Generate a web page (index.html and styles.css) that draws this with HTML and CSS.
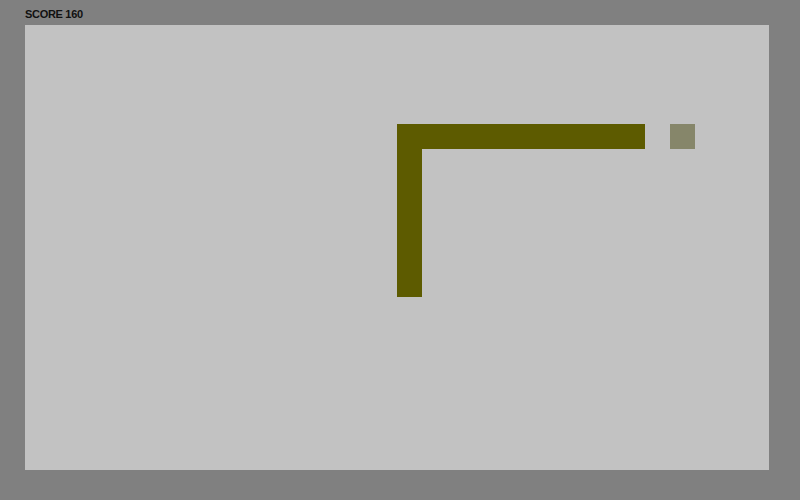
FILE: index.html
```html
<!DOCTYPE html>
<html>
<head>
<meta charset="utf-8">
<link rel="stylesheet" href="styles.css">
</head>
<body>
<div class="game">
  <div class="hud"><span class="score">SCORE 160</span></div>
  <div class="board">
    <div class="snake" style="grid-area: 5 / 16 / 6 / 26;"></div>
    <div class="snake" style="grid-area: 5 / 16 / 12 / 17;"></div>
    <div class="food" style="grid-area: 5 / 27 / 6 / 28;"></div>
  </div>
</div>
</body>
</html>
```
FILE: styles.css
```css
html, body {
  margin: 0;
  padding: 0;
  background: #808080;
  width: 800px;
  height: 500px;
  overflow: hidden;
}
.game {
  display: flex;
  flex-direction: column;
  padding: 0 31px 0 25px;
}
.hud {
  box-sizing: border-box;
  height: 25px;
  padding-top: 8px;
  display: flex;
  align-items: flex-start;
}
.score {
  font-family: "Liberation Sans", Arial, sans-serif;
  font-weight: bold;
  font-size: 11px;
  line-height: 13px;
  letter-spacing: -0.3px;
  color: #111111;
}
.board {
  width: 744px;
  height: 445px;
  background: #c2c2c2;
  display: grid;
  grid-template-columns: repeat(30, 1fr);
  grid-template-rows: repeat(18, 1fr);
}
.snake {
  background: #5d5b00;
}
.food {
  background: #86866a;
}
```
